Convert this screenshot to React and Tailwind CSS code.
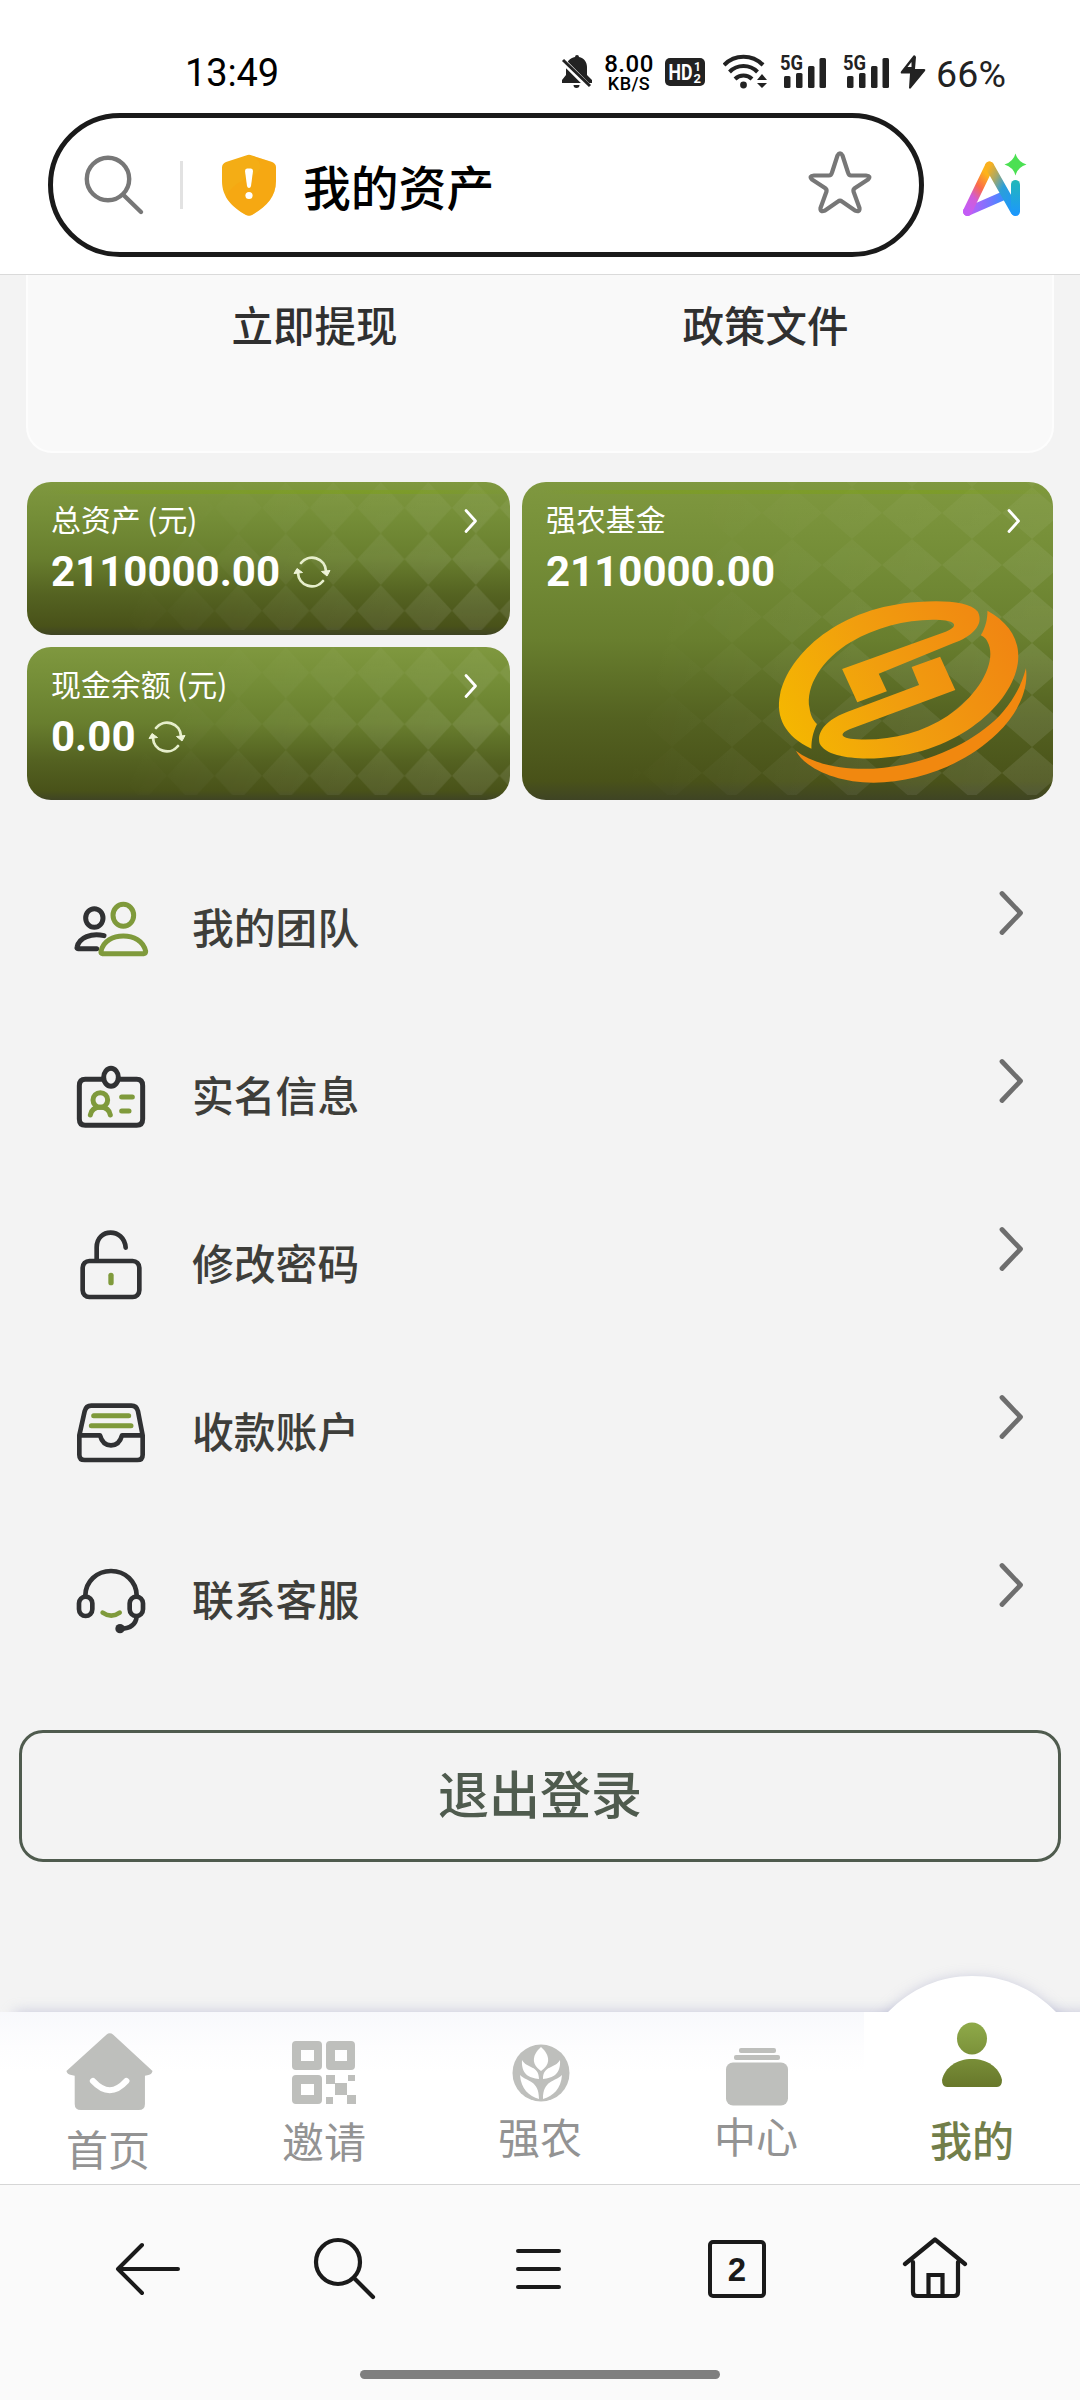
import React from "react";

const INK = "#303133";
const GREEN = "#7f9a3b";
const GREY = "#bebfbc";

function StatusBar() {
  return (
    <div className="flex h-[113px] items-start pt-[48px] font-[Roboto,sans-serif] text-[#222]">
      <div className="ml-[185px] w-[370px] shrink-0 text-[38px] leading-[50px] tracking-[-0.1px] text-black">13:49</div>
      <div className="flex h-[48px] items-center">
        <svg className="ml-[6px]" width="32" height="36" viewBox="0 0 32 36">
          <path fill="#222" d="M14 3a2 2 0 0 1 4 0c5 1 8 5 8 10v8l5 5v3H1v-3l4-5v-8c0-5 4-9 9-10zM12.500 31h6a3 3 0 0 1-6 0z" />
          <path d="M0 5 28 33" stroke="#fff" strokeWidth="6" />
          <path d="M2 6 29 32" stroke="#222" strokeWidth="3" />
        </svg>
        <div className="ml-[9px] w-[54px] pt-[3px] text-center font-medium text-black">
          <div className="text-[24px] leading-[20px] tracking-[0.5px]">8.00</div>
          <div className="text-[18px] leading-[19px] tracking-[0.4px]">KB/S</div>
        </div>
        <svg className="ml-[9px]" width="40" height="30" viewBox="0 0 40 30">
          <rect y="1" width="40" height="28" rx="5" fill="#222" />
          <text x="3.500" y="23" fontSize="22" fontWeight="bold" textLength="24" lengthAdjust="spacingAndGlyphs" fill="#fff">HD</text>
          <text x="29" y="14" fontSize="12" fontWeight="bold" fill="#fff">1</text>
          <text x="28.500" y="26" fontSize="13" fontWeight="bold" fill="#fff">2</text>
        </svg>
        <svg className="ml-[18px]" width="46" height="36" viewBox="0 0 46 36">
          <g fill="none" stroke="#222" strokeWidth="4">
            <path d="M1 11a27 27 0 0 1 39 0" />
            <path d="M6.500 18a19.500 19.500 0 0 1 28 0" />
            <path d="M12 25a12 12 0 0 1 17 0" />
          </g>
          <circle cx="20.500" cy="31" r="3.400" fill="#222" />
          <path fill="#222" d="M34 26l5-6 5 6zM34 29h10l-5 5z" />
        </svg>
        <Signal className="ml-[11px]" />
        <Signal className="ml-[17px]" />
        <svg className="ml-[11px]" width="26" height="36" viewBox="0 0 26 36">
          <path fill="#222" d="M13.500 1.500 1 17.500q-1 2 1 2h8l-1 14.500q1 1.500 2 0L25 17q1-2-1-2h-9l1-12q-1-2.500-2.500-1.500z" />
          <path fill="#fff" d="M11.500 8l-4 5h4z" />
        </svg>
        <div className="ml-[10px] mt-[4px] text-[37.500px] leading-[44px] tracking-[0.2px]">66%</div>
      </div>
    </div>
  );
}

function Signal({ className }) {
  return (
    <svg className={className} width="46" height="44" viewBox="0 -4 46 44">
      <text x="0" y="16" fontSize="20" fontWeight="bold" textLength="23" lengthAdjust="spacingAndGlyphs" fill="#222">5G</text>
      <g fill="#222">
        <rect x="4" y="22" width="6.500" height="12" rx="1.500" />
        <rect x="16" y="19" width="6.500" height="15" rx="1.500" />
        <rect x="28" y="12" width="6.500" height="22" rx="1.500" />
        <rect x="39.500" y="4" width="6.500" height="30" rx="1.500" />
      </g>
    </svg>
  );
}

function AddressBar() {
  return (
    <div className="flex h-[161px] items-start pl-[48px]">
      <div className="flex h-[144px] w-[876px] shrink-0 items-center rounded-full border-5 border-[#1a1a1a] bg-white">
        <svg className="ml-[30px] shrink-0" width="64" height="64" viewBox="83 153 64 64">
          <g fill="none" stroke="#777" strokeWidth="4.400" strokeLinecap="round">
            <circle cx="108" cy="179" r="21.200" />
            <path d="M123.500 195 141 212" />
          </g>
        </svg>
        <div className="ml-[33px] h-[48px] w-[3px] bg-[#e2e2e2]" />
        <svg className="ml-[38px] shrink-0" width="56" height="64" viewBox="0 0 56 64">
          <path fill="#f4ad15" d="M25 2.500q3-1.500 6 0L51 9q4 1.500 4 5.500V28c0 16-10 26-24 34q-3 1.500-6 0C11 54 1 44 1 28V14.500Q1 10.500 5 9z" />
          <path fill="#f9a10d" opacity=".35" d="M55 28c0 16-10 26-24 34q-3 1.500-6 0C16 57 9 51 5 44c4-10 14-16 24-20s16-12 3-21l19 6q4 1.500 4 5.500z" />
          <path fill="#fff" d="M24 18q0-2.500 2-2.500h4q2 0 2 2.500l-2 15q-.5 2-2 2t-2-2z" />
          <circle cx="28" cy="42.500" r="3.600" fill="#fff" />
        </svg>
        <div className="ml-[26px] w-[504px] pt-px font-['Noto_Sans_CJK_SC',sans-serif] text-[47.800px] leading-[60px] font-medium text-black">我的资产</div>
        <svg className="mb-[4px] shrink-0" width="66" height="66" viewBox="0 0 66 66">
          <path
            fill="none"
            stroke="#777"
            strokeWidth="4.200"
            strokeLinejoin="round"
            d="M30.500 5.500q2.500-4.500 5 0L41 22.500q.8 3 3 3h15q5.500.5 2 4L48 38q-2 1.500-1.500 3.500L52.500 58q.5 4.500-4.500 2.500L35 51.500q-2-1.500-4 0L18 60.500q-5 2-4.500-2.500L19.500 41.500Q20 39.500 18 38L5 29.500Q1.500 26 7 25.500h15q2.200 0 3-3z"
          />
        </svg>
      </div>
      <svg className="mt-[38px] ml-[37px]" width="70" height="70" viewBox="0 0 70 70">
        <defs>
          <linearGradient id="aiLeft" x1="0" y1="1" x2="0.500" y2="0">
            <stop offset="0" stopColor="#c35cf5" />
            <stop offset=".35" stopColor="#d05cd8" />
            <stop offset=".65" stopColor="#fb6a4a" />
            <stop offset="1" stopColor="#fdb31a" />
          </linearGradient>
          <linearGradient id="aiRight" x1="0" y1="0" x2="1" y2="1">
            <stop offset="0" stopColor="#f9b01f" />
            <stop offset=".25" stopColor="#a5a86b" />
            <stop offset=".5" stopColor="#2c9fd8" />
            <stop offset="1" stopColor="#1c96ff" />
          </linearGradient>
          <linearGradient id="aiStem" x1="0" y1="0" x2="0" y2="1">
            <stop offset="0" stopColor="#22b8b8" />
            <stop offset="1" stopColor="#1c96ff" />
          </linearGradient>
          <linearGradient id="aiBar" x1="0" y1="0" x2="1" y2="0">
            <stop offset="0" stopColor="#c35cf5" />
            <stop offset=".6" stopColor="#7a74ff" />
            <stop offset="1" stopColor="#3c8cff" />
          </linearGradient>
        </defs>
        <path d="M6.500 60.500 42 45" stroke="url(#aiBar)" strokeWidth="9" strokeLinecap="round" />
        <path d="M6.500 60.500 28.500 15" stroke="url(#aiLeft)" strokeWidth="9" strokeLinecap="round" />
        <path d="M28.500 15 54 60" stroke="url(#aiRight)" strokeWidth="9" strokeLinecap="round" />
        <rect x="50" y="29" width="9" height="36" rx="4.500" fill="url(#aiStem)" />
        <path fill="#4be052" d="M54.500 2.500q2.200 8.300 11 11-8.800 2.700-11 11-2.200-8.300-11-11 8.800-2.700 11-11z" />
      </svg>
    </div>
  );
}

function Refresh() {
  return (
    <svg className="ml-[13px] shrink-0" width="38" height="34" viewBox="0 0 38 34">
      <g fill="none" stroke="#e6eecb" strokeWidth="2.800" strokeLinecap="round">
        <path d="M8 8A14 14 0 0 1 33 16" />
        <path d="M30 26A14 14 0 0 1 5 18" />
      </g>
      <path fill="#eef4d8" stroke="#eef4d8" strokeLinejoin="round" d="M28.500 16.500 37 15.500 34 21zM1 18.500 4 13.500 9.500 17.500z" />
    </svg>
  );
}

function Diamonds({ id, w, h, pw, ph, ox, oy }) {
  return (
    <svg className="absolute inset-0" width={w} height={h}>
      <defs>
        <pattern id={id} width={pw} height={ph} x={ox} y={oy} patternUnits="userSpaceOnUse">
          <path fill="#fff" d={`M${pw / 2} 0 L${pw} ${ph / 2} L${pw / 2} ${ph} L0 ${ph / 2}Z`} />
        </pattern>
        <linearGradient id={id + "fade"} x1="0" y1="0" x2="1" y2="0.150">
          <stop offset=".3" stopColor="#fff" stopOpacity="0" />
          <stop offset=".6" stopColor="#fff" stopOpacity=".045" />
          <stop offset="1" stopColor="#fff" stopOpacity=".09" />
        </linearGradient>
        <linearGradient id={id + "drop"} x1="0" y1="0" x2="0" y2="1">
          <stop offset="0" stopColor="#000" stopOpacity=".5" />
          <stop offset=".5" stopColor="#000" stopOpacity="0" />
        </linearGradient>
        <mask id={id + "mask"}>
          <rect width={w} height={h} fill={`url(#${id}fade)`} />
          <rect width={w} height={h} fill={`url(#${id}drop)`} />
        </mask>
      </defs>
      <g mask={`url(#${id}mask)`}>
        <rect width={w} height={h - 5} fill={`url(#${id})`} />
      </g>
    </svg>
  );
}

function AssetCard({ title, amount, refresh, glow, pattern, className, children }) {
  return (
    <div className={`relative overflow-hidden rounded-[24px] bg-[linear-gradient(180deg,#7f983f_0%,#748d37_24%,#687e2e_50%,#546221_74%,#495219_94%,#3f4424_100%)] text-white ${className}`}>
      <Diamonds {...pattern} />
      {glow && <div className="absolute top-[8px] left-[20px] h-[4px] w-full bg-[linear-gradient(90deg,transparent,#7c9f1d99_20%,#7c9f1d99_75%,transparent)]" />}
      {children}
      <div className="relative flex items-start justify-between pt-[18px] pl-[24px]">
        <div className="font-['Noto_Sans_CJK_SC',sans-serif] text-[29.900px] leading-[36px] font-normal">{title}</div>
        <svg className="mt-[7px] mr-[30px]" width="17" height="28" viewBox="0 0 17 28">
          <path d="M3 3.500 12.500 14 3 24.500" fill="none" stroke="#fff" strokeWidth="2.800" strokeLinecap="round" strokeLinejoin="round" />
        </svg>
      </div>
      <div className="relative mt-[13px] flex items-center pl-[24px]">
        <div className="font-[Roboto,sans-serif] text-[42px] leading-[46px] font-bold">{amount}</div>
        {refresh && <Refresh />}
      </div>
    </div>
  );
}

function Coin() {
  return (
    <svg className="absolute top-[110px] left-[248px]" width="260" height="200" viewBox="730 396 703 600" preserveAspectRatio="none">
      <defs>
        <linearGradient id="coin" gradientUnits="userSpaceOnUse" x1="750" y1="800" x2="1400" y2="500">
          <stop offset="0" stopColor="#f5b800" />
          <stop offset=".45" stopColor="#f19e0e" />
          <stop offset="1" stopColor="#f18412" />
        </linearGradient>
      </defs>
      <g fill="url(#coin)">
        <path d="M842 866C770 830 745 770 757 705C780 580 920 440 1130 426C1200 420 1270 425 1292 455C1310 495 1275 530 1225 550L1024 641L1046 694L966 727L925 627L1205 515C1240 500 1235 482 1190 480C1110 475 1020 500 950 545C870 597 825 680 837 745C840 770 848 782 857 792C846 818 842 840 842 866Z" />
        <path d="M1318 452C1380 490 1408 545 1400 610C1385 730 1240 880 1030 894C960 900 880 890 864 850C855 810 890 775 940 755L1133 675L1113 621L1190 590L1231 690L945 808C915 822 920 835 965 838C1050 843 1140 820 1210 768C1300 700 1345 600 1318 545C1313 533 1306 530 1300 526C1314 500 1318 475 1318 452Z" />
        <path fill="#f1880f" d="M1422 625C1430 690 1400 760 1345 820C1260 912 1130 968 1010 968C910 968 825 925 800 872C850 915 930 930 1010 926C1150 917 1290 845 1360 755C1392 713 1412 670 1422 625Z" />
      </g>
    </svg>
  );
}

function TeamIcon() {
  return (
    <svg width="80" height="80" viewBox="63 54 240 240" fill="none" strokeWidth="15" strokeLinecap="round" strokeLinejoin="round">
      <ellipse cx="133" cy="144" rx="26" ry="28" stroke={INK} />
      <path stroke={INK} d="M162 197C125 188 87 202 81 232Q80 236 84 236H140" />
      <ellipse cx="220" cy="136" rx="31" ry="33" stroke={GREEN} />
      <path stroke={GREEN} d="M158 251Q152 250 153 244C160 212 190 198 220 198S280 212 287 244Q287 250 282 251Z" />
    </svg>
  );
}
function IdIcon() {
  return (
    <svg width="80" height="80" viewBox="63 558 240 240" fill="none" strokeWidth="15" strokeLinecap="round">
      <path stroke={INK} d="M155 628H106Q88 628 88 647V747Q88 766 106 766H260Q278 766 278 747V647Q278 628 260 628H212" />
      <ellipse cx="183" cy="622" rx="22" ry="27" stroke={INK} />
      <ellipse cx="151" cy="690" rx="22" ry="22" stroke={GREEN} />
      <path stroke={GREEN} d="M121 735C124 718 135 712 151 712S178 718 181 735M215 681H247M215 723H237" />
    </svg>
  );
}
function LockIcon() {
  return (
    <svg width="80" height="80" viewBox="63 72 240 240" fill="none" strokeWidth="14" strokeLinecap="round">
      <rect x="98" y="183" width="170" height="108" rx="20" stroke={INK} />
      <path stroke={INK} d="M140 180V142C140 84 222 82 227 143" />
      <path stroke={GREEN} strokeWidth="16" d="M183 226V248" />
    </svg>
  );
}
function TrayIcon() {
  return (
    <svg width="80" height="80" viewBox="63 576 240 240" fill="none" strokeWidth="14" strokeLinecap="round" strokeLinejoin="round">
      <path stroke={INK} d="M88 706L104 634Q108 617 124 617H244Q260 617 264 634L278 706V764Q278 780 262 780H104Q88 780 88 764ZM88 706H150Q158 736 183 736T216 706H278" />
      <path stroke={GREEN} strokeWidth="15" d="M131 647H236M124 677H243" />
    </svg>
  );
}
function HeadsetIcon() {
  return (
    <svg width="80" height="80" viewBox="63 1080 240 240" fill="none" strokeWidth="14" strokeLinecap="round">
      <path stroke={INK} d="M106 1186C107 1145 140 1113 183 1113S259 1145 260 1186" />
      <rect x="87" y="1190" width="40" height="58" rx="20" stroke={INK} />
      <rect x="239" y="1190" width="40" height="58" rx="20" stroke={INK} />
      <path stroke={INK} d="M260 1250Q256 1285 212 1286" />
      <circle cx="210" cy="1286" r="14" fill={INK} />
      <path stroke={GREEN} d="M158 1238Q184 1256 209 1238" />
    </svg>
  );
}

const rows = [
  ["我的团队", TeamIcon],
  ["实名信息", IdIcon],
  ["修改密码", LockIcon],
  ["收款账户", TrayIcon],
  ["联系客服", HeadsetIcon],
];

function Tab({ label, className, labelClass, children }) {
  return (
    <div className={`flex flex-col items-center ${className}`}>
      {children}
      <div className={`text-[42px] leading-[42px] ${labelClass}`}>{label}</div>
    </div>
  );
}

function TabBar() {
  return (
    <div className="relative h-[172px]">
      <div className="absolute inset-x-0 -top-[60px] h-[60px] overflow-hidden">
        <svg width="1080" height="60" viewBox="0 0 1080 60">
          <defs>
            <filter id="soft" x="-30%" y="-50%" width="160%" height="200%">
              <feGaussianBlur stdDeviation="7" />
            </filter>
          </defs>
          <rect x="14" y="60" width="1080" height="40" fill="#a5a8c8" opacity=".58" filter="url(#soft)" />
          <path d="M872 80C900 44 930 26 972 26S1044 44 1072 80Z" fill="#a5a8c8" opacity=".6" filter="url(#soft)" />
          <path d="M888 60C912 36 940 24 972 24S1032 36 1056 60Z" fill="#fff" />
        </svg>
      </div>
      <div className="grid h-[172px] grid-cols-5 bg-[linear-gradient(180deg,#f8f9fc_0px,#fdfdfe_35px,#fff_60px)] font-['Noto_Sans_CJK_SC',sans-serif] text-[#939393]">
        <Tab label="首页" className="pt-[18px]" labelClass="mt-[13px]">
          <svg className="ml-[3px]" width="94" height="84" viewBox="182 210 273 252" preserveAspectRatio="none">
            <path fill={GREY} d="M308 224Q318 216 328 224L442 333Q440 344 430 345L420 347V432Q420 450 402 450H234Q216 450 216 432V347L206 345Q194 343 192 333Z" />
            <path d="M269 363Q318 418 366 363" fill="none" stroke="#fff" strokeWidth="18" strokeLinecap="round" />
          </svg>
        </Tab>
        <Tab label="邀请" className="pt-[27px]" labelClass="mt-[14px]">
          <svg width="66" height="66" viewBox="0 0 66 66" fill={GREY}>
            <path fillRule="evenodd" d="M5 2h22q4 0 4 4v21q0 4-4 4H5q-4 0-4-4V6q0-4 4-4zM10 11v11h13V11zM39 2h21q4 0 4 4v21q0 4-4 4H39q-4 0-4-4V6q0-4 4-4zM44 11v11h12V11zM5 36h22q4 0 4 4v21q0 4-4 4H5q-4 0-4-4V40q0-4 4-4zM10 45v11h13V45z" />
            <path d="M35 36h9v9h-9zM57 36h7v6h-7zM44 44h12v12H44zM35 58h7v7h-7zM56 56h9v9h-9z" />
          </svg>
        </Tab>
        <Tab label="强农" className="pt-[31px]" labelClass="mt-[12px]">
          <svg className="ml-px" width="60" height="60" viewBox="0 0 60 60">
            <circle cx="30" cy="30" r="28.500" fill={GREY} />
            <g fill="#fff">
              <path d="M30 4c10 9 9 18 0 24-9-6-10-15 0-24z" />
              <path d="M11 17c5 9 17 5 17 19-10-1-18-5-17-19zM49 17c-5 9-17 5-17 19 10-1 18-5 17-19z" />
              <path d="M9 32c7 7 19 5 19 24C18 53 10 46 9 32zM51 32c-7 7-19 5-19 24 10-3 18-10 19-24z" />
            </g>
          </svg>
        </Tab>
        <Tab label="中心" className="pt-[35px]" labelClass="mt-[7px]">
          <svg className="ml-px" width="64" height="60" viewBox="0 0 64 60" fill={GREY}>
            <rect x="14" y="1" width="37" height="5" rx="2" />
            <rect x="9" y="8" width="46" height="5" rx="2" />
            <rect x="1" y="15.500" width="62" height="43" rx="7" />
          </svg>
        </Tab>
        <Tab label="我的" className="bg-white pt-[8px]" labelClass="mt-[28px] font-medium text-[#727e4a]">
          <svg width="64" height="70" viewBox="0 0 64 70">
            <defs>
              <linearGradient id="person" gradientUnits="userSpaceOnUse" x1="0" y1="0" x2="0" y2="68">
                <stop offset="0" stopColor="#90ac4a" />
                <stop offset="1" stopColor="#67772a" />
              </linearGradient>
            </defs>
            <g fill="url(#person)">
              <ellipse cx="32" cy="18.500" rx="15" ry="16" />
              <path d="M2 60C5 47 17 39 32 39S59 47 62 60Q62 67 57 67H7Q2 67 2 60Z" />
            </g>
          </svg>
        </Tab>
      </div>
    </div>
  );
}

function BrowserBar() {
  return (
    <div className="h-[216px] border-t border-[#d6d6d6] bg-[#fafafa] pt-[46px]">
      <div className="flex h-[76px] items-center">
        <svg className="ml-[113px]" width="69" height="60" viewBox="0 0 69 60" fill="none" stroke="#1a1a1a" strokeWidth="4" strokeLinecap="round" strokeLinejoin="round">
          <path d="M5 30H65M29 6 5 30 29 54" />
        </svg>
        <svg className="ml-[130px]" width="66" height="66" viewBox="312 2236 66 66" fill="none" stroke="#1a1a1a" strokeWidth="4.200" strokeLinecap="round">
          <circle cx="338" cy="2262" r="22" />
          <path d="M354 2278 373 2297" />
        </svg>
        <div className="ml-[138px] flex w-[45px] flex-col gap-[14px]">
          <div className="h-[4px] rounded-full bg-[#1a1a1a]" />
          <div className="h-[4px] rounded-full bg-[#1a1a1a]" />
          <div className="h-[4px] rounded-full bg-[#1a1a1a]" />
        </div>
        <div className="ml-[147px] flex h-[58px] w-[58px] items-center justify-center rounded-[5px] border-4 border-[#1a1a1a] font-['Liberation_Sans',sans-serif] text-[33px] leading-none font-bold text-[#1a1a1a]">2</div>
        <svg className="ml-[135px]" width="68" height="66" viewBox="0 0 68 66" fill="none" stroke="#1a1a1a" strokeWidth="4.200" strokeLinejoin="round" strokeLinecap="round">
          <path d="M4 28 34 3.500 64 28M12 26V56Q12 60 16 60H53Q57 60 57 56V26" />
          <path strokeLinejoin="miter" d="M27.500 59V39H41.500V59" />
        </svg>
      </div>
      <div className="mx-auto mt-[63px] h-[9px] w-[360px] rounded-full bg-[#7f7f7f]" />
    </div>
  );
}

export default function App() {
  return (
    <div className="h-[2400px] w-[1080px] overflow-hidden bg-[#f3f3f3]">
      <header className="h-[275px] border-b border-[#dadada] bg-white">
        <StatusBar />
        <AddressBar />
      </header>
      <main className="h-[1737px] font-['Noto_Sans_CJK_SC',sans-serif]">
        <section className="mx-[26px] grid h-[178px] grid-cols-[451px_451px] justify-center rounded-b-[26px] border-2 border-t-0 border-[#fdfdfd] bg-[#f9f9f9] pt-[28px] text-center text-[41.500px] leading-[42px] font-medium text-[#303030]">
          <div>立即提现</div>
          <div>政策文件</div>
        </section>
        <section className="mt-[29px] flex gap-[12px] pl-[27px]">
          <div className="flex flex-col gap-[12px]">
            <AssetCard title="总资产 (元)" amount="2110000.00" refresh glow className="h-[153px] w-[483px]" pattern={{ id: "d1", w: 483, h: 153, pw: 47.5, ph: 51.5, ox: 45, oy: 0 }} />
            <AssetCard title="现金余额 (元)" amount="0.00" refresh className="h-[153px] w-[483px]" pattern={{ id: "d2", w: 483, h: 153, pw: 47.5, ph: 51.5, ox: 45, oy: 0 }} />
          </div>
          <AssetCard title="强农基金" amount="2110000.00" glow className="h-[318px] w-[531px]" pattern={{ id: "d3", w: 531, h: 318, pw: 60, ph: 52, ox: 0, oy: 5 }}>
            <Coin />
          </AssetCard>
        </section>
        <section className="mt-[44px]">
          {rows.map(([label, Icon]) => (
            <div key={label} className="flex h-[168px] items-center pl-[71px]">
              <Icon />
              <div className="ml-[41px] w-[805px] pb-[5px] text-[41.800px] leading-[42px] font-medium text-[#3e3e3a]">{label}</div>
              <svg className="mb-[31px]" width="28" height="48" viewBox="0 0 28 48">
                <path d="M5 4.500 23.500 24 5 43.500" fill="none" stroke="#6e6e6e" strokeWidth="4.800" strokeLinecap="round" strokeLinejoin="round" />
              </svg>
            </div>
          ))}
        </section>
        <button className="mt-[46px] ml-[19px] block h-[132px] w-[1042px] rounded-[24px] border-3 border-[#4f5b4e] pb-[8px] text-[51px] leading-[60px] font-medium text-[#4f5b4e]">
          退出登录
        </button>
      </main>
      <TabBar />
      <BrowserBar />
    </div>
  );
}
